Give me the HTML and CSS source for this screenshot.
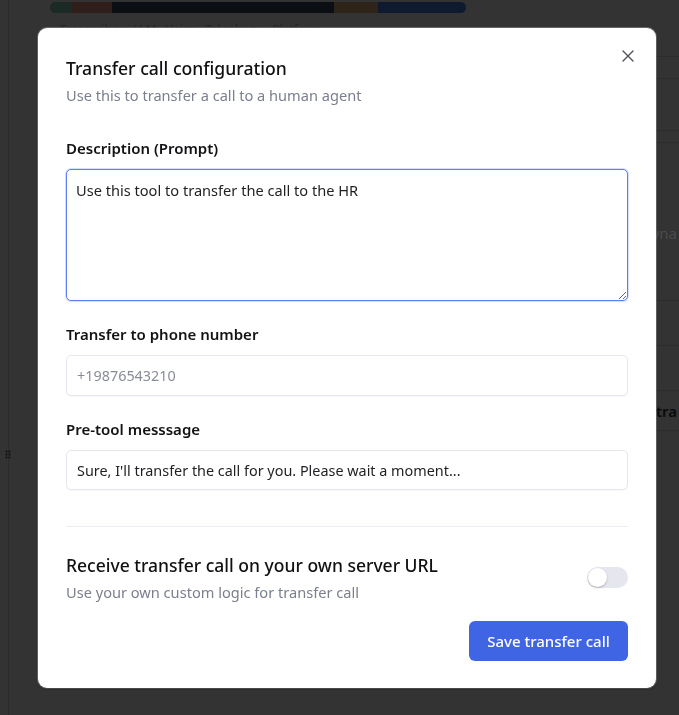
FILE: index.html
```html
<!DOCTYPE html>
<html lang="en">
<head>
    <meta charset="UTF-8">
    <meta name="viewport" content="width=device-width, initial-scale=1.0">
    <title>Transfer call configuration</title>
    <link rel="stylesheet" href="styles.css">
</head>
<body>
    <div class="page">
        <div class="rail">
            <span class="grip"></span>
        </div>
        <div class="main">
            <div class="usage-bar">
                <span class="seg seg-a"></span>
                <span class="seg seg-b"></span>
                <span class="seg seg-c"></span>
                <span class="seg seg-d"></span>
                <span class="seg seg-e"></span>
            </div>
            <div class="legend">Transcriber &nbsp; LLM &nbsp; Voice &nbsp; Telephony &nbsp; Platform</div>
            <div class="card">
                <div class="row row-1"></div>
                <div class="row row-2"></div>
                <div class="row row-3"></div>
                <div class="row row-4"><span class="ghost">Dyna</span></div>
                <div class="row row-5"></div>
                <div class="row row-6"></div>
                <div class="row row-7"><span class="ghost-bold">Call tra</span></div>
            </div>
        </div>
    </div>

    <div class="overlay">
        <div class="modal">
            <button class="close" aria-label="Close">
                <svg width="12" height="12" viewBox="0 0 12 12">
                    <path d="M1 1 L11 11 M11 1 L1 11" stroke="#52525b" stroke-width="1.4" fill="none" stroke-linecap="round"/>
                </svg>
            </button>

            <h2 class="title">Transfer call configuration</h2>
            <p class="subtitle">Use this to transfer a call to a human agent</p>

            <div class="field">
                <label class="field-label" for="prompt">Description (Prompt)</label>
                <textarea id="prompt" class="text-input prompt">Use this tool to transfer the call to the HR</textarea>
            </div>

            <div class="field">
                <label class="field-label" for="phone">Transfer to phone number</label>
                <input id="phone" class="text-input" type="text" placeholder="+19876543210">
            </div>

            <div class="field">
                <label class="field-label" for="pretool">Pre-tool messsage</label>
                <input id="pretool" class="text-input" type="text" value="Sure, I'll transfer the call for you. Please wait a moment...">
            </div>

            <hr class="divider">

            <div class="server-row">
                <div>
                    <h3 class="server-title">Receive transfer call on your own server URL</h3>
                    <p class="subtitle">Use your own custom logic for transfer call</p>
                </div>
                <span class="toggle"><span class="knob"></span></span>
            </div>

            <div class="actions">
                <button class="save-btn">Save transfer call</button>
            </div>
        </div>
    </div>

    <script src="app.js"></script>
</body>
</html>
```

FILE: styles.css
```css
body {
    margin: 0;
    font-family: "Noto Sans", "Open Sans", sans-serif;
    background: #333333;
    overflow: hidden;
}
.page {
    display: flex;
    height: 715px;
}
.rail {
    width: 8px;
    flex-shrink: 0;
    border-right: 1px solid #2b2b2b;
    padding-top: 450px;
}
.grip {
    display: block;
    width: 6px;
    height: 9px;
    margin-left: 5px;
    background: radial-gradient(circle, #1c1c1c 1px, transparent 1.3px) 0 0 / 3px 3px;
}
.main {
    flex: 1;
    padding: 2px 0 0 41px;
}
.usage-bar {
    display: flex;
    width: 416px;
    height: 11px;
    border-radius: 6px;
    overflow: hidden;
}
.seg { display: block; height: 100%; }
.seg-a { width: 22px; background: #1b2a25; }
.seg-b { width: 40px; background: #2f1e1a; }
.seg-c { width: 222px; background: #0b0f13; }
.seg-d { width: 44px; background: #2e2419; }
.seg-e { flex: 1; background: #0f1a30; }
.legend {
    font-size: 12px;
    line-height: 16px;
    color: #262626;
    margin-top: 9px;
    margin-left: 10px;
}
.card {
    margin-top: 18px;
    border-top: 1px solid #2c2c2c;
}
.row {
    border-bottom: 1px solid #2c2c2c;
    text-align: right;
    box-sizing: border-box;
    font-size: 15px;
    line-height: 20px;
}
.row-1 { height: 22px; }
.row-2 { height: 52px; }
.row-3 { height: 12px; }
.row-4 { height: 158px; padding-top: 80px; }
.row-5 { height: 45px; }
.row-6 { height: 45px; }
.row-7 { height: 40px; padding-top: 10px; }
.ghost {
    color: #4b4b4b;
    margin-right: 2px;
}
.ghost-bold {
    font-weight: 600;
    color: #0a0a0a;
    margin-right: 2px;
}

.overlay {
    position: fixed;
    inset: 0;
    padding: 28px 0 0 38px;
}
.modal {
    position: relative;
    width: 618px;
    box-sizing: border-box;
    padding: 28px 28px 27px;
    background: #ffffff;
    border-radius: 9px;
    box-shadow: 0 1px 2px rgba(0, 0, 0, 0.4), 0 0 0 1px rgba(210, 210, 220, 0.35);
}
.close {
    position: absolute;
    top: 22px;
    right: 22px;
    width: 12px;
    height: 12px;
    padding: 0;
    border: none;
    background: none;
    cursor: pointer;
    display: flex;
}
.title {
    margin: 0;
    font-size: 17.6px;
    line-height: 24px;
    font-weight: 500;
    color: #111114;
}
.subtitle {
    margin: 5px 0 0;
    font-size: 14.6px;
    line-height: 20px;
    color: #7b7f8e;
}
.field {
    display: flex;
    flex-direction: column;
    gap: 10px;
    margin-top: 22px;
}
.title + .subtitle + .field {
    margin-top: 32px;
}
.field-label {
    font-size: 15px;
    line-height: 22px;
    font-weight: 600;
    color: #131316;
}
.text-input {
    width: 100%;
    box-sizing: border-box;
    height: 40px;
    padding: 0 10px;
    font-family: inherit;
    font-size: 14.4px;
    color: #1f1f24;
    border: 1px solid #e6e7ee;
    border-radius: 5px;
    outline: none;
    box-shadow: 0 1px 1px rgba(0, 0, 0, 0.03);
}
#phone {
    height: 41px;
}
.text-input::placeholder {
    color: #8a8d98;
}
.prompt {
    height: 132px;
    padding: 9px 9px;
    font-size: 14.6px;
    line-height: 22px;
    resize: vertical;
    border-color: #5b7ff0;
    box-shadow: 0 0 0 1px rgba(91, 127, 240, 0.25);
}
.divider {
    margin: 36px 0 0;
    border: none;
    border-top: 1px solid #ececf2;
}
.server-row {
    display: flex;
    align-items: center;
    justify-content: space-between;
    margin-top: 26px;
}
.server-title {
    margin: 0;
    font-size: 17.5px;
    line-height: 24px;
    font-weight: 500;
    color: #111114;
}
.toggle {
    width: 41px;
    height: 21px;
    border-radius: 11px;
    background: #e5e6ee;
    display: flex;
    align-items: center;
    padding-left: 1px;
    box-sizing: border-box;
}
.knob {
    width: 19px;
    height: 19px;
    border-radius: 50%;
    background: #ffffff;
    box-shadow: 0 1px 2px rgba(0, 0, 0, 0.25);
}
.actions {
    display: flex;
    justify-content: flex-end;
    margin-top: 19px;
}
.save-btn {
    width: 159px;
    height: 40px;
    border: none;
    border-radius: 6px;
    background: #4065e4;
    color: #ffffff;
    font-family: inherit;
    font-size: 15px;
    font-weight: 500;
    cursor: pointer;
}
```

FILE: app.js
```js
const prompt = document.getElementById('prompt');
prompt.focus();
prompt.setSelectionRange(prompt.value.length, prompt.value.length);
```
